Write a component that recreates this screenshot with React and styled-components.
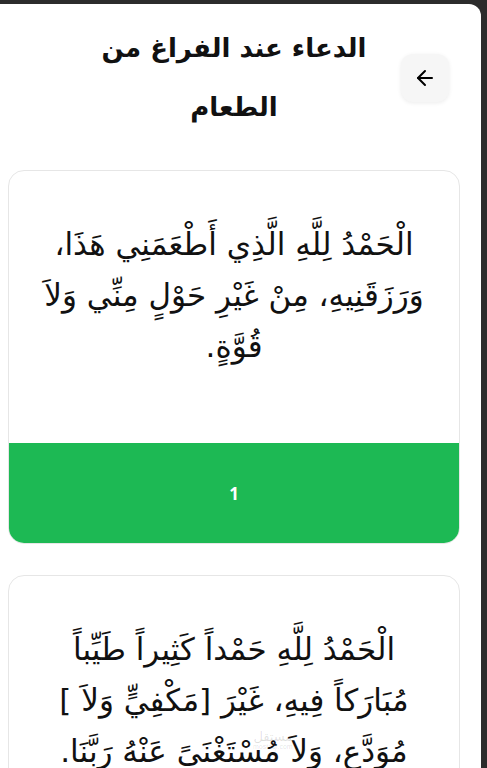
import { ArrowLeft } from "lucide-react";
import styled, { createGlobalStyle } from "styled-components";

const GlobalStyle = createGlobalStyle`
  html, body {
    margin: 0;
    background: #2c2c2c;
    overflow: hidden;
  }
  * {
    box-sizing: border-box;
  }
`;

const Sheet = styled.div`
  margin: 4px 6px 0 -13px;
  min-height: 800px;
  background: #fff;
  border-radius: 0 12px 0 0;
  padding-top: 15px;
  position: relative;
  font-family: "DejaVu Sans", "Noto Sans", sans-serif;
  color: #111;
`;

const Header = styled.div`
  display: grid;
  grid-template-columns: 48px 1fr 48px;
  align-items: center;
  padding: 0 32px;
`;

const Title = styled.h1`
  grid-column: 2;
  margin: 0;
  text-align: center;
  font-size: 26px;
  font-weight: 700;
  line-height: 59px;
`;

const BackButton = styled.button`
  grid-column: 3;
  width: 48px;
  height: 48px;
  display: flex;
  align-items: center;
  justify-content: center;
  border: none;
  border-radius: 12px;
  background: #f6f6f6;
  box-shadow: 0 1px 4px rgba(0, 0, 0, 0.08);
  color: #000;
  padding: 0;
`;

const List = styled.div`
  display: flex;
  flex-direction: column;
  gap: 31px;
  padding: 33px 21px 0;
`;

const Card = styled.div`
  border: 1px solid #e6e6e6;
  border-radius: 16px;
  overflow: hidden;
  background: #fff;
`;

const CardText = styled.p`
  margin: 0;
  padding: 48px 24px 71px;
  text-align: center;
  font-size: 31px;
  line-height: 51px;
`;

const Counter = styled.div`
  height: 100px;
  display: flex;
  align-items: center;
  justify-content: center;
  background: #1db954;
  color: #fff;
  font-family: "Open Sans", sans-serif;
  font-weight: 700;
  font-size: 17px;
`;

const Watermark = styled.div`
  position: absolute;
  left: 266px;
  top: 726px;
  font-size: 13px;
  line-height: 1;
  color: rgba(0, 0, 0, 0.12);
  text-align: center;
  pointer-events: none;

  small {
    display: block;
    font-family: "Liberation Sans", sans-serif;
    font-size: 7px;
  }
`;

const adhkar = [
  {
    text: "الْحَمْدُ لِلَّهِ الَّذِي أَطْعَمَنِي هَذَا، وَرَزَقَنِيهِ، مِنْ غَيْرِ حَوْلٍ مِنِّي وَلاَ قُوَّةٍ.",
    count: 1,
  },
  {
    text: "الْحَمْدُ لِلَّهِ حَمْداً كَثِيراً طَيِّباً مُبَارَكاً فِيهِ، غَيْرَ [مَكْفِيٍّ وَلاَ ] مُوَدَّعٍ، وَلاَ مُسْتَغْنَىً عَنْهُ رَبَّنَا.",
    count: 1,
  },
];

export default function App() {
  return (
    <>
      <GlobalStyle />
      <Sheet>
        <Header>
          <Title dir='rtl'>الدعاء عند الفراغ من الطعام</Title>
          <BackButton type='button' aria-label='back'>
            <ArrowLeft size={24} strokeWidth={2} />
          </BackButton>
        </Header>
        <List>
          {adhkar.map((item, index) => (
            <Card key={index}>
              <CardText dir='rtl'>{item.text}</CardText>
              <Counter>{item.count}</Counter>
            </Card>
          ))}
        </List>
        <Watermark>
          مستقل
          <small>mostaql.com</small>
        </Watermark>
      </Sheet>
    </>
  );
}
